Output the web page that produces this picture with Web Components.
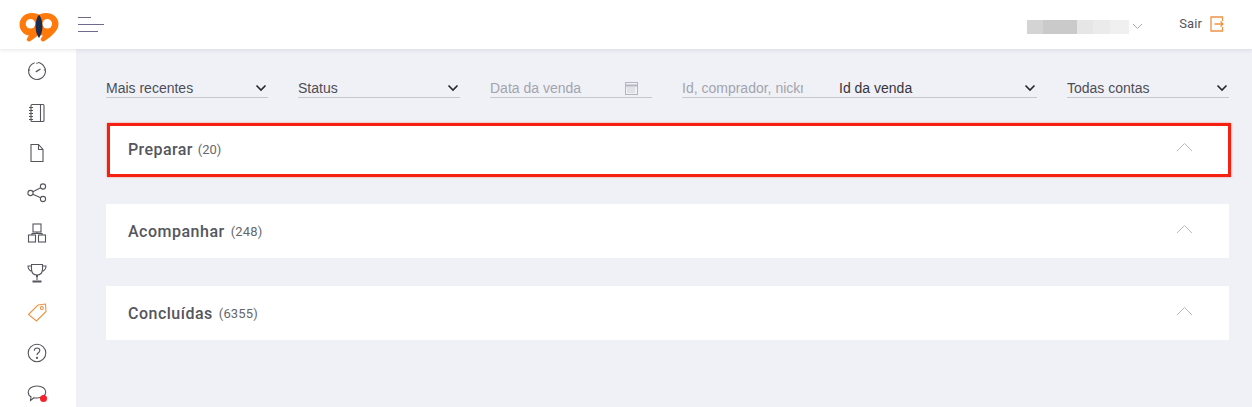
<!DOCTYPE html>
<html lang="pt">
<head>
<meta charset="utf-8">
<title>Vendas</title>
<style>
  html, body { margin: 0; height: 407px; overflow: hidden; background: #f0f1f7; }
  body { font-family: Roboto, "Liberation Sans", sans-serif; }
</style>
</head>
<body>
<app-shell>
  <top-bar slot="top"></top-bar>
  <side-nav slot="side">
    <nav-icon name="gauge"></nav-icon>
    <nav-icon name="book"></nav-icon>
    <nav-icon name="file"></nav-icon>
    <nav-icon name="share"></nav-icon>
    <nav-icon name="org"></nav-icon>
    <nav-icon name="trophy"></nav-icon>
    <nav-icon name="tag"></nav-icon>
    <nav-icon name="help"></nav-icon>
    <nav-icon name="chat"></nav-icon>
  </side-nav>
  <filter-bar>
    <filter-select style="width:162px">Mais recentes</filter-select>
    <filter-select style="width:162px">Status</filter-select>
    <filter-date style="width:162px">Data da venda</filter-date>
    <filter-search placeholder="Id, comprador, nickname" option="Id da venda"></filter-search>
    <filter-select style="width:162px">Todas contas</filter-select>
  </filter-bar>
  <sale-section label="Preparar" count="20" marked></sale-section>
  <sale-section label="Acompanhar" count="248" style="margin-bottom:1px"></sale-section>
  <sale-section label="Concluídas" count="6355"></sale-section>
</app-shell>

<script>
const chevron = `<svg width="12" height="8" viewBox="0 0 12 8" fill="none" stroke="#26262e" stroke-width="1.6"><path d="M1.5 1.5 6 6l4.5-4.5"/></svg>`;

const icons = {
  gauge: `<circle cx="12" cy="12" r="8.5" stroke-dasharray="20 3.4 30" transform="rotate(118 12 12)"/><path d="M10.8 12.8 15.5 10" stroke-width="1.4"/><path d="M12 3.5v1.5M3.8 11h1.4M20.2 11h-1.4"/>`,
  book: `<rect x="6" y="3.500" width="13" height="17" rx="1"/><path d="M15.500 3.500v17M4 6.500h4M4 9.500h4M4 12.500h4M4 15.500h4M4 18.500h4"/>`,
  file: `<path d="M6 3.500h7.500l4.500 5V20.500H6zM13.500 3.500v5h4.500"/>`,
  share: `<circle cx="5.500" cy="12" r="2.600"/><circle cx="18" cy="5.500" r="2.600"/><circle cx="18" cy="18" r="2.600"/><path d="m7.800 10.800 7.900-4.100M7.800 13.200l7.900 3.600"/>`,
  org: `<rect x="8" y="3" width="8" height="8"/><rect x="3.500" y="14" width="7" height="7"/><rect x="13.500" y="14" width="7" height="7"/><path d="M12 11v1.500M7 14v-1.500h10V14"/>`,
  trophy: `<path d="M6.500 3.500h11v4.500c0 3.800-2.200 6-5.500 6s-5.500-2.200-5.500-6zM6.500 5H3c0 2.800 1.200 4.600 4.300 5.500M17.500 5H21c0 2.800-1.200 4.600-4.300 5.500M12 14v5" /><path d="M11 15h2M7.500 20.500h9" stroke-width="2"/>`,
  tag: `<path d="m3.500 13.500 9.500-9.500 7.500-1 .5 7.500-9.500 9.500z"/><circle cx="16.800" cy="7" r="1.500"/>`,
  help: `<circle cx="12" cy="12" r="8.800"/><path d="M9.300 9.800c0-1.700 1.200-2.800 2.800-2.800s2.700 1 2.700 2.400c0 2.300-2.800 2.300-2.800 4.600"/><circle cx="12" cy="16.800" r=".6" fill="currentColor"/>`,
  chat: `<path d="M12 4c5 0 8.800 2.500 8.800 6s-3.800 6-8.800 6c-1 0-2 0-3-.3L5.500 18.500l.5-3.700C4 13.800 3.200 12 3.200 10c0-3.500 3.800-6 8.800-6z"/>`
};

// small vertical corrections, the reference icons are not on a regular step
const nudge = { gauge: -1, book: 4, file: 3, share: 2, org: 1 };

class AppShell extends HTMLElement {
  constructor() {
    super();
    this.attachShadow({ mode: "open" });
    this.shadowRoot.innerHTML = `
    <style>
      :host { display: grid; grid-template-columns: 76px 1fr; grid-template-rows: 49px 1fr; height: 407px; overflow: hidden; }
      .top { grid-column: 1 / 3; position: relative; z-index: 2; }
      .main { padding: 22px 21px 0 30px; display: flex; flex-direction: column; gap: 27px; min-width: 0; }
    </style>
    <div class="top"><slot name="top"></slot></div>
    <div><slot name="side"></slot></div>
    <div class="main"><slot></slot></div>
    `;
  }
}

class TopBar extends HTMLElement {
  constructor() {
    super();
    this.attachShadow({ mode: "open" });
    this.shadowRoot.innerHTML = `
    <style>
      :host { display: flex; align-items: flex-start; height: 49px; background: #fff; box-shadow: 0 1px 4px rgba(40,40,70,.12); color: #55565c; }
      .logo { margin: 12px 0 0 19px; width: 40px; height: 30px; }
      .menu { margin: 17px 0 0 19px; width: 26px; display: flex; flex-direction: column; align-items: flex-start; gap: 6px; }
      .menu i { display: block; height: 1px; background: #6f6a8c; }
      .user { margin: 20px 0 0 auto; display: flex; height: 14px; width: 102px; }
      .user i { display: block; height: 14px; }
      .caret { margin: 23px 0 0 3px; width: 11px; height: 7px; }
      .out { margin: 16px 0 0 36px; font-size: 13px; line-height: 16px; letter-spacing: .1px; }
      .door { margin: 16px 28px 0 8px; width: 14px; height: 16px; }
    </style>
    <svg class="logo" viewBox="0 0 40 30">
      <path fill="#ff7a0a" d="M13 1C6 1 .5 5.800.5 12.500c0 6 4.500 10.500 9.500 11-.9 1.300-1.800 2.500-2.200 3.500-.7 1.900 2 3.300 3.600 2C15 26.500 25.500 20 25.500 12 25.500 5.500 20 1 13 1z"/>
      <path fill="#ff7a0a" d="M27 1c-7 0-12.500 4.800-12.500 11.500 0 6 4.500 10.500 9.500 11-.9 1.300-1.800 2.500-2.200 3.500-.7 1.900 2 3.300 3.600 2C29 26.500 39.500 20 39.500 12 39.500 5.500 34 1 27 1z"/>
      <path fill="#1d2c4e" d="M20 2.500c4.600 6 4.600 17.500 0 23.500-4.600-6-4.600-17.500 0-23.500z"/>
      <circle cx="11.500" cy="11.800" r="4.800" fill="#fff"/>
      <circle cx="28.300" cy="11.800" r="4.800" fill="#fff"/>
    </svg>
    <div class="menu"><i style="width:13px"></i><i style="width:26px"></i><i style="width:20px"></i></div>
    <div class="user">
      <i style="width:16px;background:#d4d4d4"></i><i style="width:34px;background:#cacaca"></i><i style="width:16px;background:#e6e6e6"></i><i style="width:17px;background:#ebebeb"></i><i style="width:19px;background:#f0f0f0"></i>
    </div>
    <svg class="caret" viewBox="0 0 11 7" fill="none" stroke="#a9aab0"><path d="m1 1 4.500 4.500L10 1"/></svg>
    <span class="out">Sair</span>
    <svg class="door" viewBox="0 0 14 16" fill="none" stroke="#ef9344" stroke-width="1.300"><path d="M12.500 5V1H1v14h11.500v-4"/><path d="M4.500 8h8.500M10.500 5.500 13 8l-2.500 2.500"/></svg>
    `;
  }
}

class SideNav extends HTMLElement {
  constructor() {
    super();
    this.attachShadow({ mode: "open" });
    this.shadowRoot.innerHTML = `
    <style>
      :host { display: flex; flex-direction: column; height: 358px; background: #fff; padding: 2px 2px 0 0; overflow: hidden; box-sizing: border-box; }
    </style>
    <slot></slot>
    `;
  }
}

class NavIcon extends HTMLElement {
  connectedCallback() {
    const name = this.getAttribute("name");
    const root = this.shadowRoot || this.attachShadow({ mode: "open" });
    const color = name === "tag" ? "#ef9344" : "#55565c";
    root.innerHTML = `
    <style>
      :host { display: flex; justify-content: center; align-items: center; height: 40.300px; flex: none; position: relative; color: ${color}; }
      svg { width: 24px; height: 24px; margin-top: ${nudge[name] || 0}px; }
      .dot { position: absolute; left: 40px; top: 22px; width: 7px; height: 7px; border-radius: 50%; background: #f5222d; }
    </style>
    <svg viewBox="0 0 24 24" fill="none" stroke="currentColor" stroke-width="1.100">${icons[name]}</svg>
    ${name === "chat" ? '<span class="dot"></span>' : ""}
    `;
  }
}

class FilterBar extends HTMLElement {
  constructor() {
    super();
    this.attachShadow({ mode: "open" });
    this.shadowRoot.innerHTML = `
    <style>
      :host { display: flex; gap: 30px; height: 27px; margin-bottom: -2px; }
    </style>
    <slot></slot>
    `;
  }
}

const fieldCss = `
  :host { display: flex; align-items: center; justify-content: space-between; box-sizing: border-box; height: 27px; padding-top: 8px; border-bottom: 1px solid #c6c7cd; font: 14px/18px "Liberation Sans", Arial, sans-serif; color: #4d4e55; flex: none; }
`;

class FilterSelect extends HTMLElement {
  constructor() {
    super();
    this.attachShadow({ mode: "open" });
    this.shadowRoot.innerHTML = `
    <style>
      ${fieldCss}
      svg { margin-right: 1px; }
    </style>
    <slot></slot>
    ${chevron}
    `;
  }
}

class FilterDate extends HTMLElement {
  constructor() {
    super();
    this.attachShadow({ mode: "open" });
    this.shadowRoot.innerHTML = `
    <style>
      ${fieldCss}
      :host { color: #a3a4ad; }
      svg { margin-right: 14px; }
    </style>
    <slot></slot>
    <svg width="13" height="13" viewBox="0 0 13 13" fill="none" stroke="#b4b5bd"><rect x=".5" y=".5" width="12" height="12"/><path d="M.5 3.500h12" stroke-width="2"/><path d="M2.500 6h8M2.500 8h8M2.500 10h8" stroke-dasharray="1 1"/></svg>
    `;
  }
}

class FilterSearch extends HTMLElement {
  connectedCallback() {
    const root = this.shadowRoot || this.attachShadow({ mode: "open" });
    root.innerHTML = `
    <style>
      ${fieldCss}
      :host { width: 355px; }
      .ph { width: 121px; margin-right: 36px; flex: none; overflow: hidden; white-space: nowrap; color: #a3a4ad; }
      .opt { flex: 1; display: flex; align-items: center; justify-content: space-between; color: #35363c; }
      svg { margin-right: 1px; }
    </style>
    <span class="ph">${this.getAttribute("placeholder")}</span>
    <span class="opt">${this.getAttribute("option")}${chevron}</span>
    `;
  }
}

class SaleSection extends HTMLElement {
  connectedCallback() {
    const root = this.shadowRoot || this.attachShadow({ mode: "open" });
    root.innerHTML = `
    <style>
      :host { display: flex; align-items: center; box-sizing: border-box; height: 54px; width: 1123px; flex: none; background: #fff; padding: 0 36px 0 22px; color: #55565c; }
      :host([marked]) { width: 1124px; margin-left: 1px; padding: 0 35px 2px 18px; border: 3px solid #f5200f; box-shadow: 0 0 2px rgba(245,32,15,.5); }
      :host([marked]) span { margin-left: 5px; letter-spacing: 0; }
      :host([marked]) b { letter-spacing: .4px; }
      b { font-size: 16px; font-weight: 500; letter-spacing: .5px; }
      span { font-size: 13px; margin-left: 6px; color: #66676d; letter-spacing: .15px; }
      svg { margin: -5px 0 0 auto; }
    </style>
    <b>${this.getAttribute("label")}</b><span>(${this.getAttribute("count")})</span>
    <svg width="17" height="10" viewBox="0 0 17 10" fill="none" stroke="#b9babf"><path d="m1 9 7.500-7.500L16 9"/></svg>
    `;
  }
}

customElements.define("app-shell", AppShell);
customElements.define("top-bar", TopBar);
customElements.define("side-nav", SideNav);
customElements.define("nav-icon", NavIcon);
customElements.define("filter-bar", FilterBar);
customElements.define("filter-select", FilterSelect);
customElements.define("filter-date", FilterDate);
customElements.define("filter-search", FilterSearch);
customElements.define("sale-section", SaleSection);
</script>
</body>
</html>
